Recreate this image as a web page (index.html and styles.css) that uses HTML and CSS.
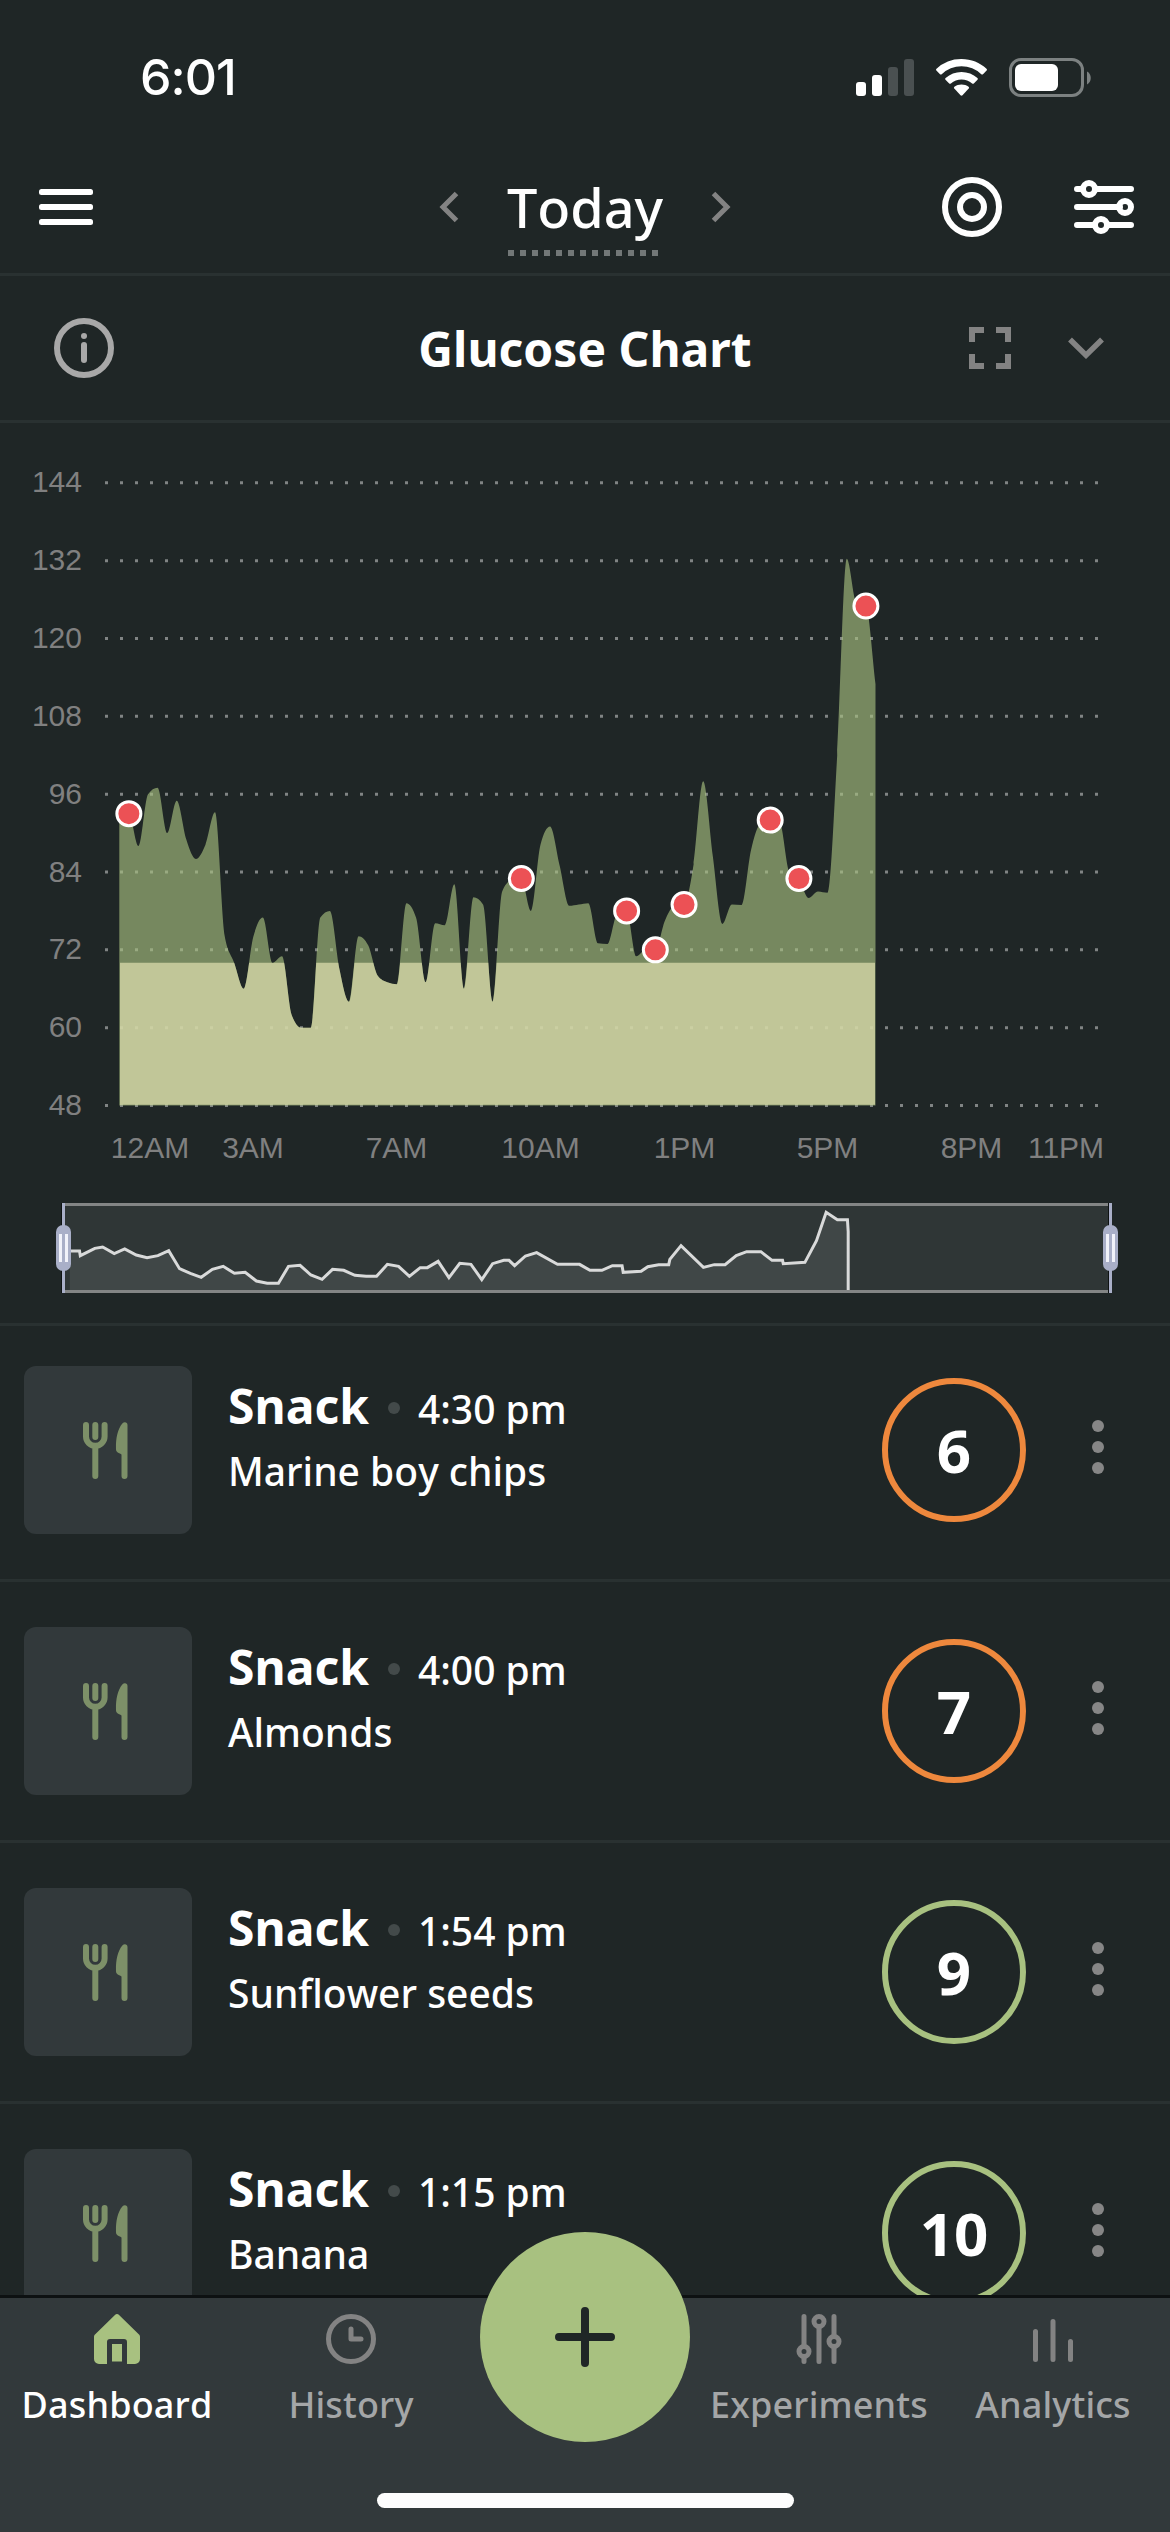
FILE: index.html
```html
<!DOCTYPE html>
<html lang="en">
<head>
<meta charset="utf-8">
<title>Glucose Dashboard</title>
<link rel="stylesheet" href="styles.css">
</head>
<body>
<svg class="defs" aria-hidden="true">
  <symbol id="cutlery" viewBox="0 0 45 57">
    <g fill="none" stroke="currentColor" stroke-width="6" stroke-linecap="round">
      <path d="M3 3v11.5a9.3 9.3 0 0 0 18.6 0V3M12.3 3v12M12.3 26v28"/>
    </g>
    <path fill="currentColor" d="M44.5 3v51a3 3 0 0 1-6 0V32.500c-1.500-1.500-5.200-1.500-5.500-5C32.700 18 34 8 39.300 1.500c2-2.300 5.200-1.500 5.200 1.500z"/>
  </symbol>
</svg>
<div class="app">
  <div class="status">
    <span class="clock">6:01</span>
    <svg class="status-icons" width="238" height="41" viewBox="0 0 238 41">
      <g fill="#fff"><rect x="2" y="25" width="10" height="14" rx="3"/><rect x="18" y="18" width="10" height="21" rx="3"/></g>
      <g fill="#4a5051"><rect x="34" y="10" width="10" height="29" rx="3"/><rect x="50" y="2" width="10" height="37" rx="3"/></g>
      <g fill="#fff">
        <path d="M107.500 2c9.700 0 18.500 3.600 25 9.800.6.600.6 1.200.1 1.800l-3.600 3.600c-.5.500-1.200.500-1.700 0a28.500 28.500 0 0 0-39.600 0c-.5.500-1.200.500-1.700 0l-3.600-3.600c-.5-.6-.5-1.200.1-1.800A36 36 0 0 1 107.500 2z"/>
        <path d="M107.500 15c6 0 11.600 2.200 15.900 6 .6.500.6 1.200.1 1.700l-3.700 3.700c-.5.500-1.100.500-1.700 0a16.400 16.400 0 0 0-21.200 0c-.6.500-1.200.500-1.700 0l-3.700-3.700c-.5-.5-.5-1.200.1-1.700a24 24 0 0 1 15.900-6z"/>
        <path d="M107.500 27.500c2.700 0 5.100.8 7.100 2.300.6.500.6 1.200.1 1.800l-6.200 6.700c-.6.600-1.400.6-2 0l-6.200-6.700c-.5-.6-.5-1.300.1-1.800 2-1.500 4.400-2.300 7.100-2.300z"/>
      </g>
      <rect x="156.500" y="2.500" width="72" height="36" rx="10.500" fill="none" stroke="#7c8181" stroke-width="3"/>
      <rect x="161" y="7" width="43" height="27" rx="6" fill="#fff"/>
      <path d="M233 14.500c5 2.300 5 10.700 0 13z" fill="#7c8181"/>
    </svg>
  </div>

  <header class="topbar">
    <svg class="menu" width="54" height="36" viewBox="0 0 54 36" fill="#fff"><rect width="54" height="6" rx="2.500"/><rect y="15" width="54" height="6" rx="2.500"/><rect y="30" width="54" height="6" rx="2.500"/></svg>
    <div class="date">
      <svg width="20" height="32" viewBox="0 0 20 32"><path d="M17.500 2.500 4 16l13.500 13.500" fill="none" stroke="#838383" stroke-width="5"/></svg>
      <span class="day">Today<i class="dots"></i></span>
      <svg width="20" height="32" viewBox="0 0 20 32"><path d="M2.500 2.500 16 16 2.500 29.500" fill="none" stroke="#838383" stroke-width="5"/></svg>
    </div>
    <div class="tools">
      <svg width="60" height="60" viewBox="0 0 60 60" fill="none" stroke="#fff" stroke-width="6"><circle cx="30" cy="30" r="27"/><circle cx="30" cy="30" r="12"/></svg>
      <svg width="60" height="54" viewBox="0 0 60 54" fill="none" stroke="#fff" stroke-width="6" stroke-linecap="round"><path d="M3 9h5M22 9h35M3 27h43M3 45h17M35 45h22"/><circle cx="15" cy="9" r="6"/><circle cx="51" cy="27" r="6"/><circle cx="27" cy="45" r="6"/></svg>
    </div>
  </header>

  <section class="card-head">
    <svg width="60" height="60" viewBox="0 0 60 60"><circle cx="30" cy="30" r="27" fill="none" stroke="#a8a8a8" stroke-width="6"/><circle cx="30" cy="18" r="3" fill="#a8a8a8"/><rect x="27" y="24" width="6" height="21" rx="3" fill="#a8a8a8"/></svg>
    <h1>Glucose Chart</h1>
    <div class="card-tools">
      <svg width="42" height="42" viewBox="0 0 42 42" fill="none" stroke="#838383" stroke-width="6"><path d="M3 15V3h12M27 3h12v12M39 27v12H27M15 39H3V27"/></svg>
      <svg width="36" height="22" viewBox="0 0 36 22"><path d="M2 2.500 18 18.200 34 2.500" fill="none" stroke="#838383" stroke-width="5.500"/></svg>
    </div>
  </section>

  <section class="chart">
    <svg id="plot" class="plot" width="1170" height="768" viewBox="0 423 1170 768"></svg>
    <div class="brush">
      <svg class="brush-line" viewBox="165 99 2814 270" preserveAspectRatio="none">
        <path class="brush-fill" d="M186 369V243L212 243 214 257 253 235 274 231 305 251 333 237 364 255 393 263 422 257 451 242 480 296 509 310 538 322 568 298 597 289 627 310 656 307 686 333 715 340 745 340 772 289 803 286 832 315 862 328 890 298 920 301 950 316 980 319 1008 319 1037 283 1067 289 1096 319 1125 293 1144 293 1173 274 1202 323 1231 280 1261 283 1290 329 1319 281 1349 271 1363 271 1378 287 1407 258 1437 248 1493 283 1552 283 1580 301 1612 301 1640 287 1666 287 1669 307 1717 304 1735 290 1764 284 1791 284 1794 268 1824 227 1884 292 1913 284 1942 284 1972 257 2000 245 2038 245 2068 271 2096 271 2098 281 2156 277 2187 212 2213 127 2243 149 2270 149 2272 185V369z"/>
        <path class="brush-stroke" d="M186 243L212 243 214 257 253 235 274 231 305 251 333 237 364 255 393 263 422 257 451 242 480 296 509 310 538 322 568 298 597 289 627 310 656 307 686 333 715 340 745 340 772 289 803 286 832 315 862 328 890 298 920 301 950 316 980 319 1008 319 1037 283 1067 289 1096 319 1125 293 1144 293 1173 274 1202 323 1231 280 1261 283 1290 329 1319 281 1349 271 1363 271 1378 287 1407 258 1437 248 1493 283 1552 283 1580 301 1612 301 1640 287 1666 287 1669 307 1717 304 1735 290 1764 284 1791 284 1794 268 1824 227 1884 292 1913 284 1942 284 1972 257 2000 245 2038 245 2068 271 2096 271 2098 281 2156 277 2187 212 2213 127 2243 149 2270 149 2272 185V369"/>
      </svg>
      <span class="handle start"></span>
      <span class="handle end"></span>
    </div>
  </section>

  <main class="meals">
    <article class="meal">
      <div class="thumb"><svg width="45" height="57"><use href="#cutlery"/></svg></div>
      <div class="info"><div class="line"><b>Snack</b><i></i><span>4:30 pm</span></div><p>Marine boy chips</p></div>
      <div class="score warn">6</div>
      <div class="more"><i></i><i></i><i></i></div>
    </article>
    <article class="meal">
      <div class="thumb"><svg width="45" height="57"><use href="#cutlery"/></svg></div>
      <div class="info"><div class="line"><b>Snack</b><i></i><span>4:00 pm</span></div><p>Almonds</p></div>
      <div class="score warn">7</div>
      <div class="more"><i></i><i></i><i></i></div>
    </article>
    <article class="meal">
      <div class="thumb"><svg width="45" height="57"><use href="#cutlery"/></svg></div>
      <div class="info"><div class="line"><b>Snack</b><i></i><span>1:54 pm</span></div><p>Sunflower seeds</p></div>
      <div class="score good">9</div>
      <div class="more"><i></i><i></i><i></i></div>
    </article>
    <article class="meal">
      <div class="thumb"><svg width="45" height="57"><use href="#cutlery"/></svg></div>
      <div class="info"><div class="line"><b>Snack</b><i></i><span>1:15 pm</span></div><p>Banana</p></div>
      <div class="score good">10</div>
      <div class="more"><i></i><i></i><i></i></div>
    </article>
  </main>

  <nav class="tabs">
    <a class="tab active">
      <svg width="50" height="50" viewBox="0 0 50 50"><path fill="#a8c180" d="M25 0c.8 0 1.300.3 1.800.8L47 20.500c.8.8 1 1.500 1 2.500v22a5 5 0 0 1-5 5h-8V28a3 3 0 0 0-3-3H18a3 3 0 0 0-3 3v22H7a5 5 0 0 1-5-5V23c0-1 .2-1.700 1-2.500L23.200.8C23.700.3 24.200 0 25 0zM20 30h10v17.500H20z"/></svg>
      <span>Dashboard</span>
    </a>
    <a class="tab">
      <svg width="50" height="50" viewBox="0 0 50 50" fill="none" stroke="#838383" stroke-width="5" stroke-linecap="round" stroke-linejoin="round"><circle cx="25" cy="25" r="22.500"/><path d="M25 15v10h10"/></svg>
      <span>History</span>
    </a>
    <div class="tab-gap">
      <button class="add" aria-label="Add"><svg width="60" height="60" viewBox="0 0 60 60"><path d="M30 4v52M4 30h52" stroke="#1f2626" stroke-width="8" stroke-linecap="round"/></svg></button>
    </div>
    <a class="tab">
      <svg width="50" height="50" viewBox="0 0 50 50" fill="none" stroke="#838383" stroke-width="5" stroke-linecap="round"><path d="M10 2.500v29M10 44v3.500M25 13v34.500M40 2.500v19M40 33v14.500"/><circle cx="10" cy="37.500" r="5"/><circle cx="25" cy="7.500" r="5"/><circle cx="40" cy="27.500" r="5"/></svg>
      <span>Experiments</span>
    </a>
    <a class="tab">
      <svg width="50" height="50" viewBox="0 0 50 50" stroke="#838383" stroke-width="5" stroke-linecap="round"><path d="M7.500 17.500v28M25 7.500v38M42.500 27.500v18"/></svg>
      <span>Analytics</span>
    </a>
    <div class="home-bar"></div>
  </nav>
</div>
<script src="chart.js"></script>
</body>
</html>
```
FILE: styles.css
```css
* { box-sizing: border-box; margin: 0; padding: 0; }
body {
  background: #1f2626;
  color: #fff;
  font-family: "Noto Sans", "Open Sans", sans-serif;
  font-weight: 500;
  font-kerning: none;
  font-variant-ligatures: none;
}
svg { display: block; flex: none; }
.defs { position: absolute; width: 0; height: 0; }
.app {
  display: flex;
  flex-direction: column;
  width: 1170px;
  height: 2532px;
  overflow: hidden;
}

.status {
  display: flex;
  justify-content: space-between;
  align-items: flex-start;
  height: 141px;
  padding: 57px 78px 0 140px;
}
.clock {
  font: 550 50px/41px Inter, sans-serif;
  letter-spacing: -1px;
}

.topbar {
  display: grid;
  grid-template-columns: 1fr auto 1fr;
  align-items: center;
  height: 135px;
  padding: 0 36px;
  border-bottom: 3px solid #293131;
}
.menu { margin-left: 3px; }
.date { display: flex; align-items: center; gap: 48px; }
.day {
  position: relative;
  font-size: 54px;
  line-height: 72px;
}
.dots {
  position: absolute;
  left: 1px;
  top: 79px;
  width: 150px;
  height: 6px;
  background: repeating-linear-gradient(90deg, #727777 0 6px, transparent 6px 12px);
}
.tools { display: flex; align-items: center; justify-content: flex-end; gap: 72px; }

.card-head {
  display: grid;
  grid-template-columns: 1fr auto 1fr;
  align-items: center;
  height: 147px;
  padding: 0 54px;
  border-bottom: 3px solid #293131;
}
.card-head h1 { padding-top: 2px; font-size: 48px; line-height: 64px; font-weight: 700; }
.card-tools { display: flex; align-items: center; justify-content: flex-end; gap: 57px; margin-right: 12px; }

.chart { height: 903px; border-bottom: 3px solid #293131; }
.plot text {
  font: 400 30px "Liberation Sans", Arial, sans-serif;
  fill: #808080;
}
.grid-line { stroke: #808484; stroke-width: 3; stroke-dasharray: 3 12; }
.area { fill: #a8c180; fill-opacity: .64; }
.low { fill: #dedeaf; fill-opacity: .72; }
.event { fill: #ec5155; stroke: #fff; stroke-width: 3; }

.brush {
  position: relative;
  width: 1050px;
  height: 90px;
  margin: 12px 0 0 62px;
  background: #2f3636;
  border: solid #838585;
  border-width: 3px 0;
}
.brush-line { width: 1050px; height: 90px; margin-top: -3px; clip-path: inset(3px 0); }
.brush-fill { fill: #404747; }
.brush-stroke { fill: none; stroke: #d9dada; stroke-width: 3; vector-effect: non-scaling-stroke; }
.handle {
  position: absolute;
  top: -3px;
  width: 3px;
  height: 90px;
  background: #a9afc8;
}
.handle.start { left: 0; box-shadow: -1px 0 #0f1313; }
.handle.end { right: 0; box-shadow: -1px 0 #0f1313; }
.handle::before {
  content: "";
  position: absolute;
  left: -6px;
  top: 22px;
  width: 15px;
  height: 46px;
  border-radius: 7px;
  background: linear-gradient(#f1f2fa, #f1f2fa) 3px 9px / 3px 28px no-repeat,
    linear-gradient(#f1f2fa, #f1f2fa) 9px 9px / 3px 28px no-repeat, #a9afc8;
}

.meals { height: 969px; overflow: hidden; }
.meal {
  display: flex;
  align-items: flex-start;
  height: 261px;
  padding: 45px 66px 0 24px;
  border-bottom: 3px solid #293131;
}
.meal:first-child { height: 256px; padding-top: 40px; }
.thumb {
  width: 168px;
  height: 168px;
  padding: 56px 0 0 59px;
  border-radius: 12px;
  background: #32393b;
  color: #7d9068;
}
.info { flex: 1; padding: 8px 0 0 36px; }
.line { display: flex; align-items: baseline; }
.line b { font-size: 48px; line-height: 64px; font-weight: 700; }
.line i {
  width: 12px;
  height: 12px;
  margin: 0 18px 0 19px;
  border-radius: 50%;
  background: #434a4a;
  transform: translateY(-10px);
}
.line span { font-size: 39px; line-height: 52px; }
.info p { margin-top: 7px; font-size: 39px; line-height: 52px; }
.score {
  width: 144px;
  height: 144px;
  margin: 12px 66px 0 0;
  border: 6px solid;
  border-radius: 50%;
  font-size: 60px;
  line-height: 132px;
  font-weight: 700;
  text-align: center;
}
.score.warn { border-color: #ee883d; }
.score.good { border-color: #a8c180; }
.more { display: flex; flex-direction: column; gap: 9px; padding-top: 54px; }
.more i { width: 12px; height: 12px; border-radius: 50%; background: #868686; }

.tabs {
  position: relative;
  display: grid;
  grid-template-columns: repeat(5, 234px);
  align-items: start;
  height: 237px;
  border-top: 3px solid #0d1112;
  background: #32393b;
}
.tab {
  display: flex;
  flex-direction: column;
  align-items: center;
  gap: 17px;
  padding-top: 16px;
  color: #a4a6a7;
  font-size: 36px;
  line-height: 48px;
  letter-spacing: 0.15px;
}
.tab.active { color: #fff; }
.tab-gap { display: flex; justify-content: center; }
.add {
  display: flex;
  align-items: center;
  justify-content: center;
  width: 210px;
  height: 210px;
  margin-top: -66px;
  border: 0;
  border-radius: 50%;
  background: #a8c180;
}
.home-bar {
  position: absolute;
  left: 377px;
  bottom: 24px;
  width: 417px;
  height: 15px;
  border-radius: 8px;
  background: #fdfdfd;
}
```
FILE: chart.js
```js
const values = [
  93, 93, 88, 96, 97, 90, 95, 89, 86, 88.2, 93.2, 74.2, 70, 66, 74, 77, 70, 71, 62, 60,
  60, 77, 78, 69, 64, 74.1, 72.7, 68, 67, 66.7, 79.2, 77, 67, 76.1, 75.8, 82.1, 66, 80.1, 79, 64,
  81, 82.8, 83, 78, 88.2, 91, 85, 78.8, 79, 79.2, 73, 72.9, 77.5, 78, 71, 72, 72, 76.5, 78.8, 79,
  85.2, 98, 86.5, 76, 79, 78.9, 87.4, 91.5, 92, 91.6, 84, 83, 80, 81, 80.8, 102, 132.3, 125.5, 125, 113
];
const events = [1, 42, 53, 56, 59, 68, 71, 78];
const hours = [["12AM", 150], ["3AM", 253], ["7AM", 396.5], ["10AM", 540.5], ["1PM", 684.5], ["5PM", 827.5], ["8PM", 971.5], ["11PM", 1066]];
const base = 1105.5;
const px = i => 119.3 + i * 9.572;
const py = v => base - (v - 48) * 6.486;

// Monotone cubic interpolation through evenly spaced samples.
function curve(vals) {
  const p = vals.map((v, i) => [px(i), py(v)]);
  const n = p.length;
  const h = p[1][0] - p[0][0];
  const s = [];
  for (let i = 0; i < n - 1; i++) s.push((p[i + 1][1] - p[i][1]) / h);
  const t = p.map((_, i) => {
    if (i === 0) return s[0];
    if (i === n - 1) return s[n - 2];
    const a = s[i - 1], b = s[i];
    return (Math.sign(a) + Math.sign(b)) * Math.min(Math.abs(a), Math.abs(b), Math.abs(a + b) / 4) || 0;
  });
  let d = `M${p[0][0]} ${p[0][1]}`;
  for (let i = 0; i < n - 1; i++) {
    d += `C${p[i][0] + h / 3} ${p[i][1] + t[i] * h / 3} ${p[i + 1][0] - h / 3} ${p[i + 1][1] - t[i + 1] * h / 3} ${p[i + 1][0]} ${p[i + 1][1]}`;
  }
  return `${d}V${base}H${p[0][0]}Z`;
}

let out = "";
for (let v = 48; v <= 144; v += 12) {
  out += `<path class="grid-line" d="M105 ${py(v)}H1098"/>`;
  out += `<text x="82" y="${py(v) + 9.5}" text-anchor="end">${v}</text>`;
}
const d = curve(values);
out += `<path class="area" d="${d}"/>`;
out += `<clipPath id="low"><rect x="120" y="${py(70)}" width="755" height="142"/></clipPath><path class="low" clip-path="url(#low)" d="${d}"/>`;
for (const [label, x] of hours) out += `<text x="${x}" y="1158" text-anchor="middle">${label}</text>`;
for (const i of events) out += `<circle class="event" cx="${px(i)}" cy="${py(values[i])}" r="12"/>`;
document.getElementById("plot").innerHTML = out;
```
